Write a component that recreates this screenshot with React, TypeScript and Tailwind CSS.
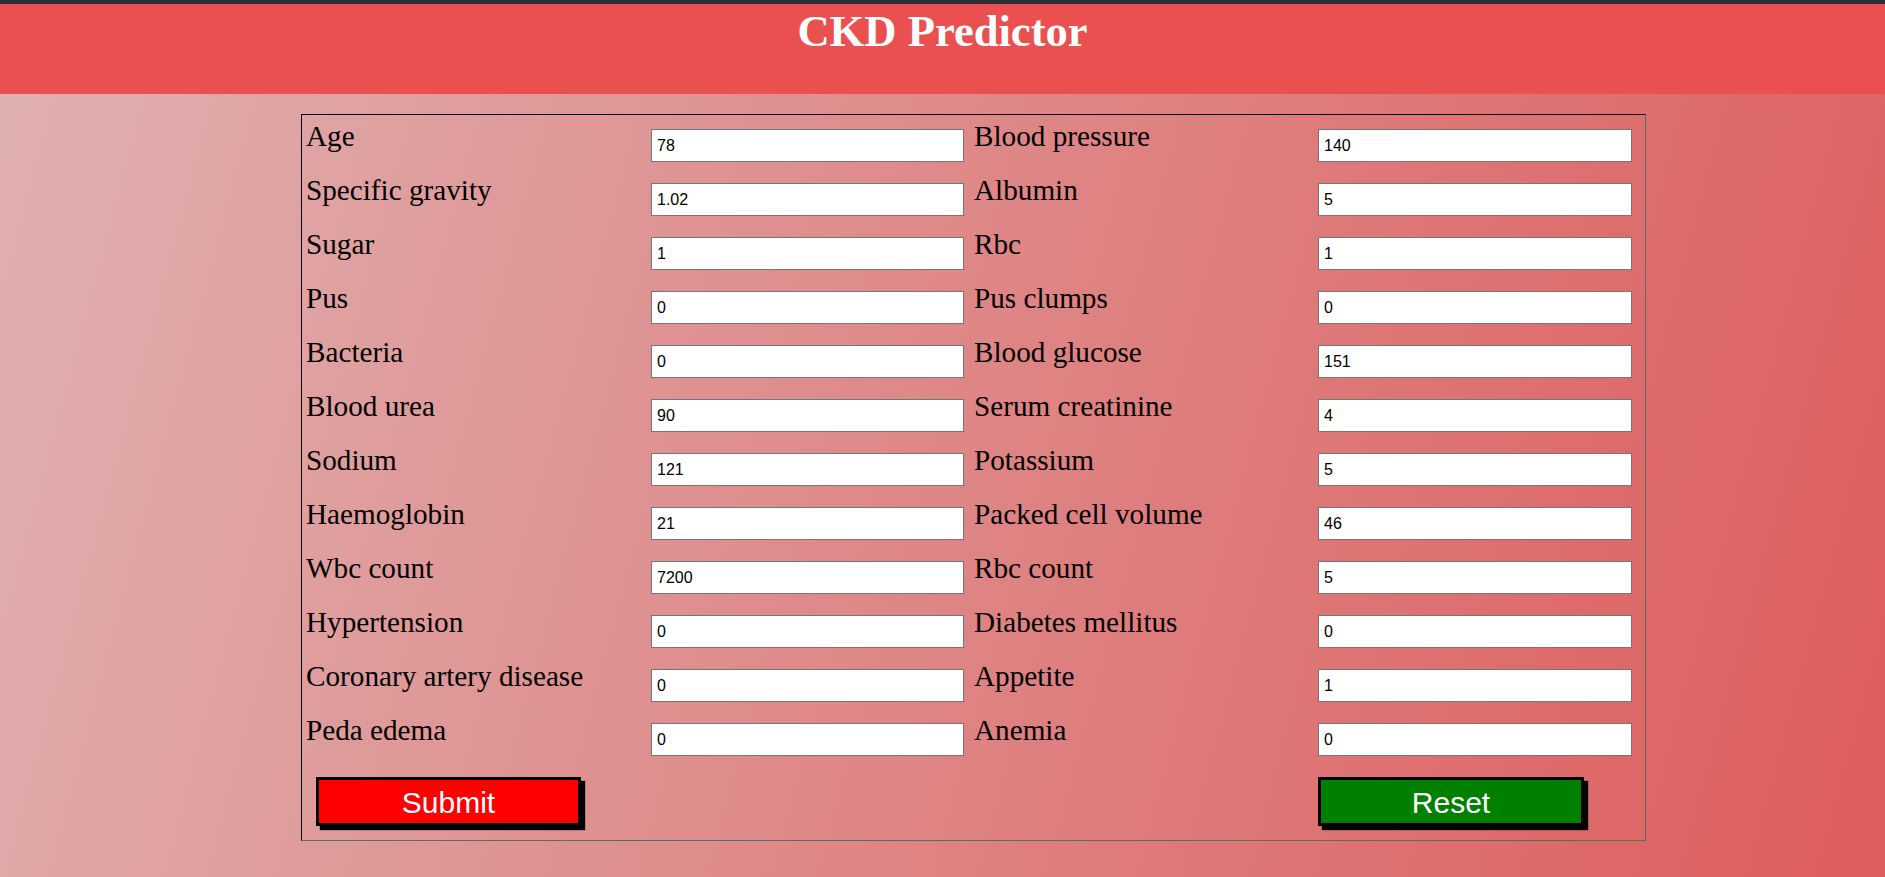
import { useState } from 'react';

type Field = { label: string; value: string };

const fields: [Field, Field][] = [
  [{ label: 'Age', value: '78' }, { label: 'Blood pressure', value: '140' }],
  [{ label: 'Specific gravity', value: '1.02' }, { label: 'Albumin', value: '5' }],
  [{ label: 'Sugar', value: '1' }, { label: 'Rbc', value: '1' }],
  [{ label: 'Pus', value: '0' }, { label: 'Pus clumps', value: '0' }],
  [{ label: 'Bacteria', value: '0' }, { label: 'Blood glucose', value: '151' }],
  [{ label: 'Blood urea', value: '90' }, { label: 'Serum creatinine', value: '4' }],
  [{ label: 'Sodium', value: '121' }, { label: 'Potassium', value: '5' }],
  [{ label: 'Haemoglobin', value: '21' }, { label: 'Packed cell volume', value: '46' }],
  [{ label: 'Wbc count', value: '7200' }, { label: 'Rbc count', value: '5' }],
  [{ label: 'Hypertension', value: '0' }, { label: 'Diabetes mellitus', value: '0' }],
  [{ label: 'Coronary artery disease', value: '0' }, { label: 'Appetite', value: '1' }],
  [{ label: 'Peda edema', value: '0' }, { label: 'Anemia', value: '0' }],
];

function Cell({ field, labelWidth, inputWidth }: { field: Field; labelWidth: string; inputWidth: string }) {
  const [value, setValue] = useState(field.value);
  return (
    <>
      <label className={`${labelWidth} shrink-0 pt-[1px] text-[29.2px] leading-[32px] text-black`}>{field.label}</label>
      <input
        value={value}
        onChange={(e) => setValue(e.target.value)}
        className={`${inputWidth} mt-[10px] h-[33px] shrink-0 border border-[#767676] bg-white px-[5px] font-['Liberation_Sans',Arial,sans-serif] text-[16px] text-black outline-none`}
      />
    </>
  );
}

export default function App() {
  return (
    <div className="min-h-[877px] bg-linear-[105deg] from-[#e0b1b1] to-[#dd5c5c] font-['Liberation_Serif','Times_New_Roman',serif]">
      <div className="h-[4px] bg-[#2f2f37]" />

      {/* Header */}
      <header className="h-[90px] bg-[#eb5051] pt-[2px] text-center">
        <h1 className="text-[44.6px] font-bold leading-[50px] text-white">CKD Predictor</h1>
      </header>

      {/* Form */}
      <form
        onSubmit={(e) => e.preventDefault()}
        className="ml-[301px] mt-[20px] w-[1345px] border border-t-black border-l-black border-r-[#666] border-b-[#666] pt-[4px] pb-[14px] pl-[4px]"
      >
        {fields.map(([a, b]) => (
          <div key={a.label} className="flex h-[54px] items-start">
            <Cell field={a} labelWidth="w-[345px]" inputWidth="w-[313px]" />
            <div className="w-[10px] shrink-0" />
            <Cell field={b} labelWidth="w-[344px]" inputWidth="w-[314px]" />
          </div>
        ))}

        <div className="mt-[10px] flex">
          <div className="w-[1012px] shrink-0">
            <button
              type="submit"
              className="ml-[10px] h-[49px] w-[265px] border-[3px] border-black bg-[#ff0000] font-['Liberation_Sans',Arial,sans-serif] text-[30px] text-white shadow-[4px_4px_1px_#000]"
            >
              Submit
            </button>
          </div>
          <button
            type="reset"
            className="h-[49px] w-[266px] border-[3px] border-black bg-[#008000] font-['Liberation_Sans',Arial,sans-serif] text-[30px] text-white shadow-[4px_4px_1px_#000]"
          >
            Reset
          </button>
        </div>
      </form>
    </div>
  );
}
